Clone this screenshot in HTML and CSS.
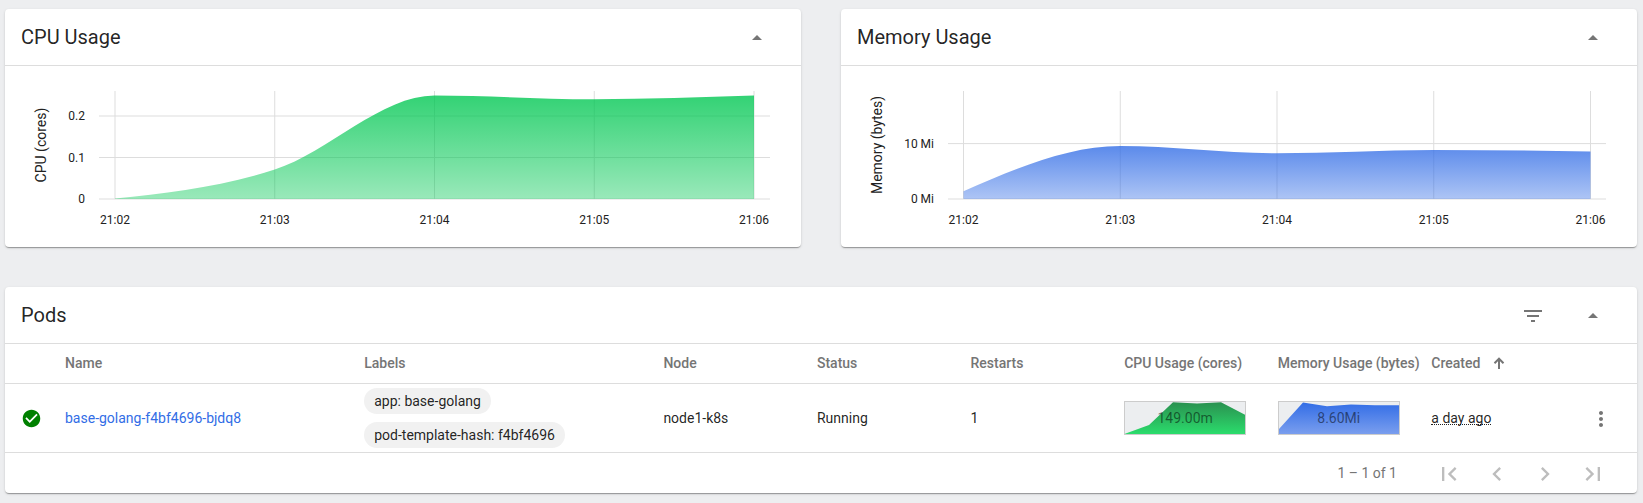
FILE: index.html
```html
<!DOCTYPE html>
<html lang="en">
<head>
<meta charset="utf-8">
<title>Workload</title>
<link rel="stylesheet" href="styles.css">
</head>
<body>
<main class="page">
  <div class="charts">
    <section class="card">
      <header class="card-header">
        <h2 class="card-title">CPU Usage</h2>
        <svg class="icon" viewBox="0 0 24 24"><path d="M7 14l5-5 5 5z"/></svg>
      </header>
      <svg class="chart" viewBox="0 0 796 181">
        <defs>
          <linearGradient id="cpu-fill" x1="0" y1="0" x2="0" y2="1">
            <stop offset="0" stop-color="#00c752" stop-opacity=".8"/>
            <stop offset="1" stop-color="#00c752" stop-opacity=".4"/>
          </linearGradient>
        </defs>
        <path class="grid" d="M110 25V133M269.75 25V133M429.5 25V133M589.25 25V133M749 25V133M94 50H765M94 91.5H765M94 133H765"/>
        <path fill="url(#cpu-fill)" d="M110 132.6C163.25 126.6 216.5 120.8 269.75 103.5C323 86.3 376.25 29.5 429.5 29.5C482.75 29.5 536 33.2 589.25 33.2C642.5 33.2 695.75 31.3 749 29.5V133H110Z"/>
        <g class="tick tick-x"><text x="110" y="158">21:02</text><text x="269.75" y="158">21:03</text><text x="429.5" y="158">21:04</text><text x="589.25" y="158">21:05</text><text x="749" y="158">21:06</text></g>
        <g class="tick tick-y"><text x="80" y="54">0.2</text><text x="80" y="95.5">0.1</text><text x="80" y="137">0</text></g>
        <text class="axis" transform="translate(41 79) rotate(-90)">CPU (cores)</text>
      </svg>
    </section>
    <section class="card">
      <header class="card-header">
        <h2 class="card-title">Memory Usage</h2>
        <svg class="icon" viewBox="0 0 24 24"><path d="M7 14l5-5 5 5z"/></svg>
      </header>
      <svg class="chart" viewBox="0 0 796 181">
        <defs>
          <linearGradient id="mem-fill" x1="0" y1="0" x2="0" y2="1">
            <stop offset="0" stop-color="#326de6" stop-opacity=".8"/>
            <stop offset="1" stop-color="#326de6" stop-opacity=".4"/>
          </linearGradient>
        </defs>
        <path class="grid" d="M122.5 25V133M279.25 25V133M436 25V133M592.75 25V133M749.5 25V133M107 77.6H765M107 133H765"/>
        <path fill="url(#mem-fill)" d="M122.5 125.3C174.75 102.6 227 80 279.25 80C331.5 80 383.75 87.3 436 87.3C488.25 87.3 540.5 84 592.75 84C645 84 697.25 84.7 749.5 85.4V133H122.5Z"/>
        <g class="tick tick-x"><text x="122.5" y="158">21:02</text><text x="279.25" y="158">21:03</text><text x="436" y="158">21:04</text><text x="592.75" y="158">21:05</text><text x="749.5" y="158">21:06</text></g>
        <g class="tick tick-y"><text x="93" y="82">10 Mi</text><text x="93" y="137">0 Mi</text></g>
        <text class="axis" transform="translate(41 79) rotate(-90)">Memory (bytes)</text>
      </svg>
    </section>
  </div>

  <section class="card">
    <header class="card-header">
      <h2 class="card-title">Pods</h2>
      <svg class="icon" viewBox="0 0 24 24"><path d="M10 18h4v-2h-4v2zM3 6v2h18V6H3zm3 7h12v-2H6v2z"/></svg>
      <svg class="icon" viewBox="0 0 24 24"><path d="M7 14l5-5 5 5z"/></svg>
    </header>
    <div class="row row-head">
      <span></span>
      <span>Name</span>
      <span>Labels</span>
      <span>Node</span>
      <span>Status</span>
      <span>Restarts</span>
      <span>CPU Usage (cores)</span>
      <span>Memory Usage (bytes)</span>
      <span class="sorted">Created <svg class="sort" viewBox="0 0 12 12"><path d="M6 12V2M1.500 6.200L6 1.700L10.500 6.200"/></svg></span>
      <span></span>
    </div>
    <div class="row row-body">
      <svg class="status" viewBox="0 0 24 24"><path d="M12 2C6.480 2 2 6.480 2 12s4.480 10 10 10 10-4.480 10-10S17.520 2 12 2zm-2 15l-5-5 1.410-1.410L10 14.170l7.590-7.590L19 8l-9 9z"/></svg>
      <a class="link">base-golang-f4bf4696-bjdq8</a>
      <div class="chips">
        <span class="chip">app: base-golang</span>
        <span class="chip">pod-template-hash: f4bf4696</span>
      </div>
      <span>node1-k8s</span>
      <span>Running</span>
      <span>1</span>
      <div class="spark">
        <svg class="spark-plot" viewBox="0 0 120 32">
          <defs><linearGradient id="spark-cpu" x1="0" y1="0" x2="0" y2="1"><stop offset="0" stop-color="#2a9150"/><stop offset="1" stop-color="#2bdc6c"/></linearGradient></defs>
          <path fill="url(#spark-cpu)" d="M0 31.700L24 23L48 .3L72 1.500L96 .3L120 12.700V32H0Z"/>
        </svg>
        <span class="spark-value">149.00m</span>
      </div>
      <div class="spark">
        <svg class="spark-plot" viewBox="0 0 120 32">
          <defs><linearGradient id="spark-mem" x1="0" y1="0" x2="0" y2="1"><stop offset="0" stop-color="#326de6"/><stop offset="1" stop-color="#7a9eee"/></linearGradient></defs>
          <path fill="url(#spark-mem)" d="M0 27L24 .4L48 4.200L72 2.400L96 3.300H120V32H0Z"/>
        </svg>
        <span class="spark-value">8.60Mi</span>
      </div>
      <span><span class="age">a day ago</span></span>
      <svg class="icon menu" viewBox="0 0 24 24"><path d="M12 8c1.100 0 2-.9 2-2s-.9-2-2-2-2 .9-2 2 .9 2 2 2zm0 2c-1.100 0-2 .9-2 2s.9 2 2 2 2-.9 2-2-.9-2-2-2zm0 6c-1.100 0-2 .9-2 2s.9 2 2 2 2-.9 2-2-.9-2-2-2z"/></svg>
    </div>
    <footer class="pager">
      <span class="range">1 – 1 of 1</span>
      <svg class="page-icon" viewBox="0 0 24 24"><path d="M18.410 16.590L13.820 12l4.590-4.590L17 6l-6 6 6 6zM6 6h2v12H6z"/></svg>
      <svg class="page-icon" viewBox="0 0 24 24"><path d="M15.410 7.410L14 6l-6 6 6 6 1.410-1.410L10.830 12z"/></svg>
      <svg class="page-icon" viewBox="0 0 24 24"><path d="M10 6L8.590 7.410 13.170 12l-4.580 4.590L10 18l6-6z"/></svg>
      <svg class="page-icon" viewBox="0 0 24 24"><path d="M5.590 7.410L10.180 12l-4.590 4.590L7 18l6-6-6-6zM16 6h2v12h-2z"/></svg>
    </footer>
  </section>
</main>
</body>
</html>
```
FILE: styles.css
```css
* { box-sizing: border-box; }

body {
  margin: 0;
  background: #edeef0;
  color: rgba(0, 0, 0, .87);
  font: 14px/20px Roboto, sans-serif;
}

.page {
  display: flex;
  flex-direction: column;
  gap: 40px;
  height: 503px;
  padding: 9px 6px 10px 5px;
  overflow: hidden;
}

.charts {
  display: grid;
  grid-template-columns: 1fr 1fr;
  gap: 40px;
}

.card {
  background: #fff;
  border-radius: 4px;
  box-shadow: 0 2px 1px -1px rgba(0, 0, 0, .2), 0 1px 1px 0 rgba(0, 0, 0, .14), 0 1px 3px 0 rgba(0, 0, 0, .12);
}

.card-header {
  display: flex;
  align-items: center;
  gap: 36px;
  height: 57px;
  padding: 1px 32px 0 16px;
  border-bottom: 1px solid #ddd;
}

.card-title {
  flex: 1;
  margin: 0 0 2px;
  font-size: 20px;
  font-weight: 400;
  line-height: 24px;
}

.icon {
  width: 24px;
  height: 24px;
  fill: #757575;
}

.chart {
  display: block;
  width: 796px;
  height: 181px;
}

.grid { fill: none; stroke: #ddd; stroke-width: 1; }
.tick { font-size: 12px; fill: #212121; }
.tick-x { text-anchor: middle; }
.tick-y { text-anchor: end; }
.axis { font-size: 14px; fill: #212121; text-anchor: middle; }

.row {
  display: grid;
  grid-template-columns: 60px 299.200px 299.200px repeat(5, 153.600px) 1fr 48px;
  align-items: center;
  border-bottom: 1px solid #ddd;
  white-space: nowrap;
}

.row-head {
  height: 40px;
  padding-bottom: 2px;
  color: #757575;
  font-weight: 500;
}

.row-body { height: 69px; }

.sorted { display: flex; align-items: center; gap: 13px; }

.sort {
  width: 12px;
  height: 12px;
  fill: none;
  stroke: #757575;
  stroke-width: 2;
}

.status {
  width: 21px;
  height: 21px;
  margin: 1px 0 0 15.500px;
  fill: #008000;
}

.link { color: #326de6; }

.chips {
  display: flex;
  flex-direction: column;
  align-items: flex-start;
  gap: 8px;
}

.chip {
  padding: 3px 10px;
  border-radius: 13px;
  background: #f1f1f1;
}

.spark {
  display: grid;
  width: 122px;
  height: 34px;
  border: 1px solid #ccc;
  background: #eceef0;
}

.spark-plot, .spark-value { grid-area: 1 / 1; }
.spark-plot { width: 120px; height: 32px; }

.spark-value {
  align-self: center;
  color: rgba(0, 0, 0, .5);
  text-align: center;
  z-index: 1;
}

.age {
  display: inline-block;
  border-bottom: 1px dotted #212121;
  line-height: 12px;
}

.menu { margin: 2px 0 0; }

.pager {
  display: flex;
  align-items: center;
  justify-content: flex-end;
  gap: 20px;
  height: 40px;
  padding-right: 30px;
  color: #757575;
}

.range { margin-right: 18px; }

.page-icon {
  width: 28px;
  height: 28px;
  margin-top: 2px;
  fill: #bdbdbd;
}
```
